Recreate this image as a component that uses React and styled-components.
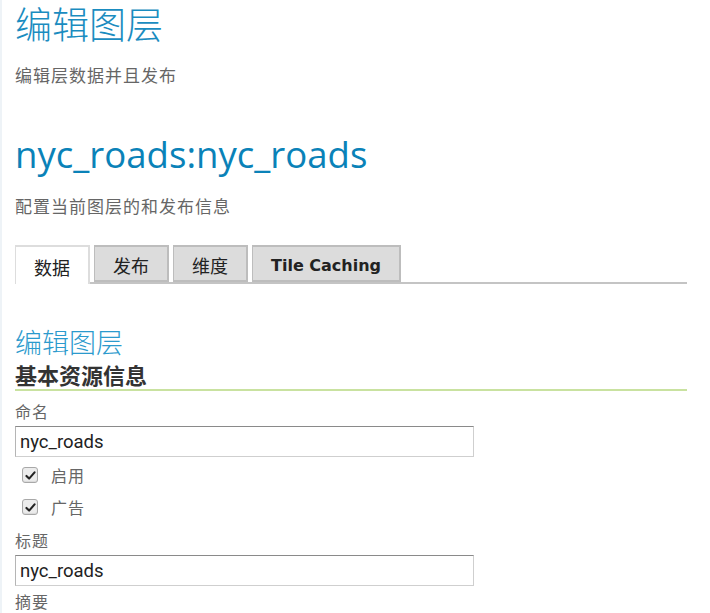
import React, {useState} from "react"
import styled, {createGlobalStyle} from "styled-components"

const GlobalStyle = createGlobalStyle`
  html, body {
    margin: 0;
    padding: 0;
    background: #fff;
  }
  body {
    font-family: "Open Sans", "Noto Sans CJK SC", sans-serif;
  }
`

const tabs = ['数据', '发布', '维度', 'Tile Caching']

const App = () => {
  const [active, setActive] = useState(0)
  const [enabled, setEnabled] = useState(true)
  const [advertised, setAdvertised] = useState(true)
  const [name, setName] = useState('nyc_roads')
  const [title, setTitle] = useState('nyc_roads')

  return (
    <Page>
      <GlobalStyle/>
      <PageTitle>编辑图层</PageTitle>
      <Description top={19}>编辑层数据并且发布</Description>
      <LayerTitle>nyc_roads:nyc_roads</LayerTitle>
      <Description top={20}>配置当前图层的和发布信息</Description>

      <TabBar>
        {
          tabs.map((item, index) =>
            <Tab
              key={index}
              active={index === active}
              latin={index === 3}
              onClick={() => setActive(index)}
            >
              {item}
            </Tab>
          )
        }
      </TabBar>

      <SectionTitle>编辑图层</SectionTitle>
      <GroupTitle>基本资源信息</GroupTitle>

      <FieldLabel>命名</FieldLabel>
      <TextInput value={name} onChange={e => setName(e.target.value)}/>

      <CheckRow>
        <Check type="checkbox" checked={enabled} onChange={e => setEnabled(e.target.checked)}/>
        <CheckLabel>启用</CheckLabel>
      </CheckRow>
      <CheckRow>
        <Check type="checkbox" checked={advertised} onChange={e => setAdvertised(e.target.checked)}/>
        <CheckLabel>广告</CheckLabel>
      </CheckRow>

      <FieldLabel top={7}>标题</FieldLabel>
      <TextInput value={title} onChange={e => setTitle(e.target.value)}/>

      <FieldLabel top={5}>摘要</FieldLabel>
    </Page>
  )
}

const Page = styled.div`
  min-height: 613px;
  box-sizing: border-box;
  padding: 0 23px 0 13px;
  border-left: 2px solid #eef3f7;
`

const PageTitle = styled.h1`
  margin: 0;
  font-family: "Noto Sans CJK SC", sans-serif;
  font-weight: 300;
  font-size: 37px;
  line-height: 46px;
  color: #1a8cc0;
`

const Description = styled.p`
  margin: ${props => props.top}px 0 0;
  font-family: "Noto Sans CJK SC", sans-serif;
  font-size: 17px;
  letter-spacing: 1px;
  line-height: 20px;
  color: #666;
`

const LayerTitle = styled.h2`
  margin: 47px 0 0;
  font-family: "Open Sans", sans-serif;
  font-weight: 400;
  font-size: 36.6px;
  line-height: 44px;
  color: #0a82b8;
`

const TabBar = styled.div`
  display: flex;
  align-items: flex-end;
  gap: 4px;
  margin-top: 29px;
  border-bottom: 2px solid #c4c4c4;
  height: 37px;
`

const Tab = styled.button`
  height: ${props => props.active ? 39 : 37}px;
  margin-bottom: ${props => props.active ? -2 : 0}px;
  box-sizing: border-box;
  padding: ${props => props.latin ? '4px 18px 0' : '2px 18px 0'};
  border: 2px solid ${props => props.active ? '#ddd' : '#bdbdbd'};
  border-bottom: ${props => props.active ? '0' : '2px solid #bdbdbd'};
  border-left-width: 1px;
  background: ${props => props.active ? '#fff' : '#dcdcdc'};
  font-family: ${props => props.latin ? '"DejaVu Sans", sans-serif' : '"Noto Sans CJK SC", sans-serif'};
  font-weight: ${props => props.latin ? 700 : 400};
  font-size: ${props => props.latin ? '16px' : '18px'};
  color: #222;
  cursor: pointer;
  outline: 0;
`

const SectionTitle = styled.h3`
  margin: 42px 0 0;
  font-family: "Noto Sans CJK SC", sans-serif;
  font-weight: 300;
  font-size: 27px;
  line-height: 32px;
  color: #2b9acd;
`

const GroupTitle = styled.h4`
  margin: 4px 0 0;
  padding-bottom: 3px;
  font-family: "Noto Sans CJK SC", sans-serif;
  font-weight: 700;
  font-size: 22px;
  line-height: 24px;
  color: #333;
  border-bottom: 2px solid #c9e2a0;
`

const FieldLabel = styled.div`
  margin-top: ${props => props.top || 10}px;
  font-family: "Noto Sans CJK SC", sans-serif;
  font-size: 16px;
  letter-spacing: 1px;
  line-height: 20px;
  color: #666;
`

const TextInput = styled.input`
  display: block;
  width: 459px;
  height: 31px;
  box-sizing: border-box;
  margin-top: 5px;
  padding: 0 4px;
  border: 1px solid #cfcfcf;
  border-top-color: #8a8a8a;
  border-left-color: #b5b5b5;
  font-family: Roboto, "Liberation Sans", sans-serif;
  font-size: 18.5px;
  color: #222;
  outline: 0;
`

const CheckRow = styled.label`
  display: flex;
  align-items: center;
  height: 32px;
  padding-left: 7px;
  &:first-of-type {
    margin-top: 2px;
  }
`

const Check = styled.input`
  appearance: none;
  width: 16px;
  height: 16px;
  margin: 0 13px 0 0;
  border: 1px solid #a8a8a8;
  border-radius: 3px;
  background-color: #ececec;
  box-shadow: inset 0 -1px 1px rgba(0, 0, 0, 0.08);
  &:checked {
    background-image: url("data:image/svg+xml,%3Csvg xmlns='http://www.w3.org/2000/svg' viewBox='0 0 16 16'%3E%3Cpath d='M3 8.5 L6.3 11.8 L13 4.2' fill='none' stroke='%23222' stroke-width='2.6' stroke-linecap='round' stroke-linejoin='round'/%3E%3C/svg%3E");
    background-size: 13px 13px;
    background-position: center;
    background-repeat: no-repeat;
  }
`

const CheckLabel = styled.span`
  font-family: "Noto Sans CJK SC", sans-serif;
  font-size: 16px;
  letter-spacing: 1px;
  color: #666;
`

export default App
